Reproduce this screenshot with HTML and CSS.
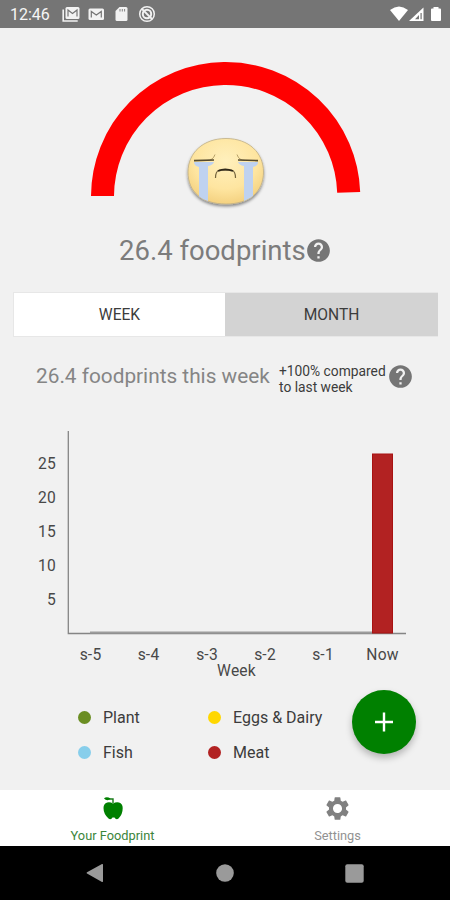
FILE: index.html
```html
<!DOCTYPE html>
<html lang="en">
  <head>
    <meta charset="UTF-8" />
    <meta name="viewport" content="width=device-width, initial-scale=1.0" />
    <title>Your Foodprint</title>
    <link rel="stylesheet" href="styles.css">
  </head>
  <body>
    <!-- Status bar -->
    <div class="status-bar">
      <span class="clock">12:46</span>
      <svg class="notifications" width="96" height="18" viewBox="0 0 96 18">
        <path d="M1.2 4.500v11.500h14.500" fill="none" stroke="#f2f2f2" stroke-width="1.600" />
        <rect x="3.500" y="2" width="14" height="12" rx="1.500" fill="#f2f2f2" />
        <path d="M6 11.500V5l4.500 3.500L15 5v6.500" fill="none" stroke="#757575" stroke-width="1.200" />
        <rect x="26.500" y="3.500" width="15.500" height="11.500" rx="1.500" fill="#f2f2f2" />
        <path d="M29.300 12.500V6.500l5 3.500 5-3.500v6" fill="none" stroke="#757575" stroke-width="1.200" />
        <path d="M57.500 2h6.500q1.500 0 1.500 1.500v11q0 1.500-1.500 1.500h-9q-1.500 0-1.500-1.500V6z" fill="#f2f2f2" />
        <path d="M58 4v2.500M60.300 4v2.500M62.600 4v2.500" stroke="#757575" stroke-width="0.900" />
        <circle cx="85" cy="9" r="7.300" fill="none" stroke="#f2f2f2" stroke-width="1.500" />
        <circle cx="85" cy="9" r="4.200" fill="none" stroke="#f2f2f2" stroke-width="2" />
        <path d="M80 4l10 10" stroke="#f2f2f2" stroke-width="1.800" />
      </svg>
      <svg class="signals" width="52" height="18" viewBox="0 0 52 18">
        <path d="M0 5Q9-2 18 5L9 16z" fill="#fff" />
        <path d="M19 16L33.500 2.500V16z" fill="#fff" />
        <path d="M25 14.300L29 10v4.300zM30.500 8h1.200v6.300h-1.200z" fill="#757575" />
        <path d="M43.500 2h5v1.500h1.500q1 0 1 1V15q0 1-1 1h-8q-1 0-1-1V4.500q0-1 1-1h1.500z" fill="#fff" />
      </svg>
    </div>

    <main>
      <svg class="gauge" width="290" height="156" viewBox="80 56 290 156">
        <defs>
          <radialGradient id="face" cx="50%" cy="35%" r="70%">
            <stop offset="0" stop-color="#fff0bd" />
            <stop offset="0.6" stop-color="#fee5a0" />
            <stop offset="1" stop-color="#f2cd79" />
          </radialGradient>
          <filter id="shadow" x="-20%" y="-20%" width="140%" height="150%">
            <feDropShadow dx="0" dy="2" stdDeviation="1.500" flood-color="#000" flood-opacity="0.45" />
          </filter>
          <clipPath id="face-clip">
            <path d="M226 138.500C249 138.500 263.500 153 263.500 172C263.500 192 249 204 226 204C202 204 188 192 188 172C188 153 203 138.500 226 138.500z" />
          </clipPath>
        </defs>
        <path d="M102.500 196A123.138 123.138 0 0 1 348.700 192.300" fill="none" stroke="#f00" stroke-width="23" />
        <path d="M226 138.500C249 138.500 263.500 153 263.500 172C263.500 192 249 204 226 204C202 204 188 192 188 172C188 153 203 138.500 226 138.500z" fill="url(#face)" stroke="#bfae85" stroke-width="0.800" filter="url(#shadow)" />
        <g clip-path="url(#face-clip)" fill="#bfd2f0">
          <path d="M194 162h20q-1 3-6 4v40h-9v-39q-5-1-5-5z" />
          <path d="M258 162h-20q1 3 6 4v40h9v-39q5-1 5-5z" />
        </g>
        <path d="M207 160.500q6 0 8-6M245 160.500q-6 0-8-6" fill="none" stroke="#b9a269" stroke-width="1" />
        <path d="M194 160.600l20-.6M258 160.600l-20-.6" fill="none" stroke="#54492c" stroke-width="1.600" />
        <path d="M215.500 178q0-7 4-8h12q4 1 4 8" fill="none" stroke="#75653e" stroke-width="1.200" />
        <path d="M218 171q7-3 15 0" fill="none" stroke="#30291b" stroke-width="1.800" />
      </svg>

      <div class="total">
        <span>26.4 foodprints</span>
        <svg width="25" height="25" viewBox="1 1 22 22">
          <path class="help-icon" d="M12 2C6.480 2 2 6.480 2 12s4.480 10 10 10 10-4.480 10-10S17.520 2 12 2zm1 17h-2v-2h2v2zm2.070-7.750l-.9.920C13.450 12.900 13 13.500 13 15h-2v-.5c0-1.100.45-2.100 1.170-2.830l1.240-1.260c.37-.36.590-.86.590-1.410 0-1.100-.9-2-2-2s-2 .9-2 2H8c0-2.210 1.790-4 4-4s4 1.790 4 4c0 .88-.36 1.680-.93 2.250z" />
        </svg>
      </div>

      <div class="tabs">
        <button class="tab active">WEEK</button>
        <button class="tab">MONTH</button>
      </div>

      <div class="summary">
        <span class="summary-total">26.4 foodprints this week</span>
        <span class="summary-change">+100% compared<br />to last week</span>
        <svg width="25" height="25" viewBox="1 1 22 22">
          <path class="help-icon" d="M12 2C6.480 2 2 6.480 2 12s4.480 10 10 10 10-4.480 10-10S17.520 2 12 2zm1 17h-2v-2h2v2zm2.070-7.750l-.9.920C13.450 12.900 13 13.500 13 15h-2v-.5c0-1.100.45-2.100 1.170-2.830l1.240-1.260c.37-.36.590-.86.590-1.410 0-1.100-.9-2-2-2s-2 .9-2 2H8c0-2.210 1.790-4 4-4s4 1.790 4 4c0 .88-.36 1.680-.93 2.250z" />
        </svg>
      </div>

      <!-- Weekly chart -->
      <svg class="chart" width="450" height="260" viewBox="0 424 450 260">
        <g text-anchor="end">
          <text x="56" y="469">25</text>
          <text x="56" y="503">20</text>
          <text x="56" y="537">15</text>
          <text x="56" y="571">10</text>
          <text x="56" y="605">5</text>
        </g>
        <path d="M68.300 431v202.500H406" fill="none" stroke="#858585" stroke-width="1.300" />
        <path d="M90 632.500h282" stroke="#9c9c9c" stroke-width="2" />
        <rect x="372.500" y="454" width="20" height="179" fill="#b22222" stroke="#a81212" stroke-width="1" />
        <g text-anchor="middle">
          <text x="90.500" y="660">s-5</text>
          <text x="148.500" y="660">s-4</text>
          <text x="207" y="660">s-3</text>
          <text x="265" y="660">s-2</text>
          <text x="323" y="660">s-1</text>
          <text x="382.500" y="660">Now</text>
          <text x="236.500" y="676">Week</text>
        </g>
      </svg>

      <div class="legend">
        <div class="legend-item"><i class="dot plant"></i>Plant</div>
        <div class="legend-item"><i class="dot eggs"></i>Eggs &amp; Dairy</div>
        <div class="legend-item"><i class="dot fish"></i>Fish</div>
        <div class="legend-item"><i class="dot meat"></i>Meat</div>
      </div>

      <button class="add-btn" aria-label="Add">
        <svg width="18" height="20" viewBox="0 0 18 20">
          <path d="M9 .5v19M0 10h18" stroke="#fff" stroke-width="2.400" />
        </svg>
      </button>
    </main>

    <nav class="bottom-nav">
      <a class="nav-item active">
        <svg width="24" height="24" viewBox="0 0 24 24">
          <path d="M8 3h4v4" fill="none" stroke="#187b18" stroke-width="1.400" />
          <path d="M3 2.200Q6 .3 9.500 2.500q-1.500 2.200-4 1.600Q4 3.800 3 2.200z" fill="#008000" />
          <path d="M12 7.500Q15 5.800 18 6.500q3.700 1 3.700 5.500 0 6.500-4.200 10.500-1.500 1.300-3 .3l-1-1.300h-2l-1 1.300q-1.500 1-3-.3Q2.500 18 2.500 12q0-4.500 3.700-5.500 3-.7 5.800 1z" fill="#008000" />
        </svg>
        <span>Your Foodprint</span>
      </a>
      <a class="nav-item">
        <svg width="25" height="25" viewBox="1 1 22 22">
          <path fill="#808080" d="M19.430 12.980c.04-.32.070-.64.070-.98s-.03-.66-.07-.98l2.110-1.650c.19-.15.240-.42.120-.64l-2-3.460c-.12-.22-.39-.3-.61-.22l-2.490 1c-.52-.4-1.080-.73-1.690-.98l-.38-2.650C14.460 2.180 14.250 2 14 2h-4c-.25 0-.46.180-.49.420l-.38 2.650c-.61.250-1.170.59-1.690.98l-2.490-1c-.23-.09-.49 0-.61.220l-2 3.460c-.13.220-.07.49.12.640l2.110 1.650c-.04.320-.07.650-.07.980s.03.660.07.980l-2.110 1.650c-.19.150-.24.420-.12.640l2 3.460c.12.220.39.300.61.220l2.490-1c.52.400 1.080.730 1.690.980l.38 2.650c.03.240.24.420.49.420h4c.25 0 .46-.18.49-.42l.38-2.650c.61-.25 1.170-.59 1.690-.98l2.490 1c.23.090.49 0 .61-.22l2-3.460c.12-.22.070-.49-.12-.64zM12 16c-2.210 0-4-1.790-4-4s1.790-4 4-4 4 1.790 4 4-1.790 4-4 4z" />
        </svg>
        <span>Settings</span>
      </a>
    </nav>

    <div class="system-nav">
      <svg width="18" height="20" viewBox="0 0 18 20"><path d="M1 9.200L16 1q1-.4 1 .8v16.500q0 1-1 .6L1 10.600q-1-.7 0-1.400z" /></svg>
      <svg width="18" height="18" viewBox="0 0 18 18"><circle cx="9" cy="9" r="8.800" /></svg>
      <svg width="19" height="19" viewBox="0 0 19 19"><rect x=".3" y=".3" width="18.400" height="18.400" rx="2" /></svg>
    </div>
  </body>
</html>
```
FILE: styles.css
```css
* {
  box-sizing: border-box;
}
body {
  margin: 0;
  width: 450px;
  height: 900px;
  display: flex;
  flex-direction: column;
  font-family: Roboto, "Liberation Sans", sans-serif;
  background-color: #f1f1f1;
  color: #3c3c3c;
  overflow: hidden;
}
svg {
  display: block;
  flex-shrink: 0;
}
button {
  font-family: inherit;
  border: none;
  padding: 0;
}
.status-bar {
  display: flex;
  align-items: center;
  height: 28px;
  padding: 0 8px 0 10px;
  background-color: #757575;
  color: #f5f5f5;
}
.clock {
  width: 52px;
  font-size: 16px;
}
.signals {
  margin-left: auto;
}
main {
  position: relative;
  height: 762px;
}
.gauge {
  margin: 28px auto 0;
}
.total {
  display: flex;
  align-items: center;
  height: 34px;
  margin: 21px 0 0 119px;
  font-size: 27.5px;
  color: #7c7c7c;
}
.total span {
  width: 187px;
  white-space: nowrap;
}
.help-icon {
  fill: #757575;
}
.tabs {
  display: flex;
  height: 45px;
  margin: 25px 12px 0 13px;
  border: 1px solid #e7e7e7;
  border-right: none;
}
.tab {
  flex: 1;
  font-size: 15.6px;
  background-color: #d3d3d3;
  color: #3c3c3c;
}
.tab.active {
  flex: 0 0 211px;
  background-color: #fff;
}
.summary {
  display: flex;
  align-items: center;
  height: 34px;
  margin: 22px 0 0 36px;
}
.summary-total {
  width: 243px;
  font-size: 20.8px;
  color: #858585;
  white-space: nowrap;
}
.summary-change {
  width: 109px;
  margin-top: 5px;
  font-size: 13.8px;
  line-height: 16px;
  white-space: nowrap;
}
.chart {
  margin-top: 31px;
}
.chart text {
  font-size: 15.6px;
  letter-spacing: 0.2px;
  fill: #484848;
}
.legend {
  display: grid;
  grid-template-columns: 130px 130px;
  grid-auto-rows: 35px;
  margin: 16px 0 0 78px;
  font-size: 16px;
}
.legend-item {
  display: flex;
  align-items: center;
  white-space: nowrap;
}
.dot {
  width: 13px;
  height: 13px;
  margin-right: 12px;
  border-radius: 50%;
}
.plant {
  background-color: #6b8e23;
}
.eggs {
  background-color: #ffd700;
}
.fish {
  background-color: #87ceeb;
}
.meat {
  background-color: #b22222;
}
/* Floating button over the chart area */
.add-btn {
  position: absolute;
  right: 34px;
  bottom: 36px;
  display: flex;
  align-items: center;
  justify-content: center;
  width: 64px;
  height: 64px;
  border-radius: 50%;
  background-color: #008000;
  box-shadow: 0 4px 7px rgba(0, 0, 0, 0.25);
}
.bottom-nav {
  display: flex;
  height: 56px;
  background-color: #fff;
}
.nav-item {
  flex: 1;
  display: flex;
  flex-direction: column;
  align-items: center;
  justify-content: space-between;
  padding: 6px 0 3px;
  font-size: 12.8px;
  color: #929292;
}
.nav-item.active {
  color: #3b853b;
}
.system-nav {
  display: flex;
  align-items: center;
  justify-content: space-between;
  height: 54px;
  padding: 0 86px;
  background-color: #000;
  fill: #9a9a9a;
}
```
